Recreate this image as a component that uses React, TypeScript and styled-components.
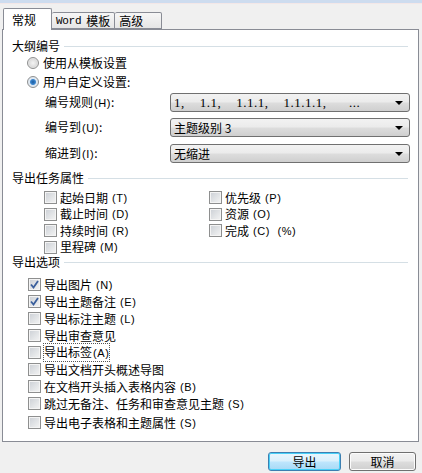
import React from 'react'
import styled, { createGlobalStyle } from 'styled-components'

const GlobalStyle = createGlobalStyle`
  html, body {
    margin: 0;
    padding: 0;
    background: #f0f0f0;
  }
  body {
    font-family: "Noto Sans CJK SC", "Liberation Sans", sans-serif;
    font-size: 12px;
    color: #000;
  }
`

const Window = styled.div`
  width: 422px;
  height: 473px;
  background: #f0f0f0;
  overflow: hidden;
  display: flex;
  flex-direction: column;
`

const TopStrip = styled.div`
  height: 3px;
  background: #cddcef;
  border-bottom: 1px solid #f3e7e7;
`

const TabBar = styled.div`
  display: flex;
  align-items: flex-end;
  height: 26px;
  padding-left: 3px;
  margin-bottom: -1px;
  position: relative;
  z-index: 1;
`

const Tab = styled.div<{ $active?: boolean; $first?: boolean; $width: number }>`
  height: ${p => (p.$active ? 22 : 17)}px;
  padding: 0 ${p => (p.$active ? 8 : 4)}px;
  margin-bottom: ${p => (p.$active ? 0 : 1)}px;
  min-width: ${p => p.$width}px;
  box-sizing: border-box;
  display: flex;
  align-items: center;
  border: 1px solid #898c95;
  border-bottom: ${p => (p.$active ? 'none' : '1px solid #898c95')};
  border-left: ${p => (p.$first || p.$active ? '1px solid #898c95' : 'none')};
  border-radius: 2px 2px 0 0;
  background: ${p => (p.$active ? '#fff' : 'linear-gradient(#f6f6f6, #e6e6e6)')};
  font-size: 12px;
  line-height: 14px;
  white-space: nowrap;
`

const Mono = styled.span`
  font-family: "Liberation Mono", monospace;
  font-size: 11px;
  letter-spacing: -0.3px;
  margin-right: 5px;
`

const Panel = styled.div`
  margin-left: 2px;
  width: 417px;
  height: 413px;
  box-sizing: border-box;
  border: 1px solid #898c95;
  background: #fff;
  padding: 8px 8px 0 9px;
  display: flex;
  flex-direction: column;
`

const GroupHeader = styled.div<{ $mt?: number }>`
  display: flex;
  align-items: center;
  gap: 4px;
  height: 16px;
  margin-top: ${p => p.$mt ?? 0}px;
  line-height: 16px;
  &::after {
    content: '';
    flex: 1;
    height: 1px;
    margin-right: 2px;
    background: #d5dfe5;
  }
`

const RadioRow = styled.label<{ $mt?: number }>`
  display: flex;
  align-items: center;
  gap: 4px;
  height: 18px;
  margin-top: ${p => p.$mt ?? 0}px;
  padding-left: 15px;
  line-height: 16px;
`

const RadioDot = styled.span<{ $on?: boolean }>`
  width: 12px;
  height: 12px;
  box-sizing: border-box;
  border-radius: 50%;
  border: 1px solid #8e8f8f;
  background: radial-gradient(circle at 50% 50%, ${p => (p.$on ? '#1b5a9e 0, #3d87cf 2.5px, #dfe8f1 3.5px' : '#f4f4f4 0, #dcdcdc 4px, #e8e8e8 5px')});
  flex: none;
`

const FieldRow = styled.div<{ $mt?: number }>`
  display: flex;
  align-items: center;
  height: 19px;
  margin-top: ${p => p.$mt ?? 0}px;
  padding-left: 33px;
`

const FieldLabel = styled.span`
  width: 125px;
  flex: none;
  line-height: 16px;
`

const Select = styled.div<{ $serif?: boolean }>`
  flex: 1;
  height: 19px;
  box-sizing: border-box;
  border: 1px solid #707070;
  border-radius: 3px;
  background: linear-gradient(#f2f2f2 0%, #ebebeb 48%, #dddddd 52%, #cfcfcf 100%);
  display: flex;
  align-items: center;
  padding: 0 6px 0 3px;
  line-height: 16px;
  font-family: ${p => (p.$serif ? '"Liberation Serif", serif' : 'inherit')};
  font-size: ${p => (p.$serif ? 13 : 12)}px;
  letter-spacing: ${p => (p.$serif ? 0.5 : 0)}px;
  white-space: pre;
`

const SelectText = styled.span`
  flex: 1;
`

const Arrow = styled.span`
  width: 0;
  height: 0;
  border-left: 4px solid transparent;
  border-right: 4px solid transparent;
  border-top: 4px solid #000;
`

const TaskGrid = styled.div`
  display: grid;
  grid-template-columns: 165px 1fr;
  grid-auto-flow: column;
  grid-template-rows: repeat(4, 16.5px);
  margin-top: 3px;
  padding-left: 32px;
`

const CheckRow = styled.label<{ $mt?: number; $indent?: number }>`
  display: flex;
  align-items: center;
  gap: 3px;
  height: 17px;
  margin-top: ${p => p.$mt ?? 0}px;
  padding-left: ${p => p.$indent ?? 0}px;
  line-height: 16px;
  white-space: nowrap;
`

const Box = styled.span`
  width: 13px;
  height: 13px;
  box-sizing: border-box;
  border: 1px solid #8e8f8f;
  background: linear-gradient(135deg, #cbcfd5 0%, #e4e6e8 60%, #f4f4f4 100%);
  box-shadow: inset 0 0 0 1px #f4f4f4;
  flex: none;
  display: flex;
  align-items: center;
  justify-content: center;
`

const Acc = styled.span`
  font-family: "Liberation Sans", sans-serif;
  font-size: 11px;
  margin-left: 1px;
  letter-spacing: 0.6px;
  white-space: pre;
`

const Focus = styled.span`
  outline: 1px dotted #555;
  outline-offset: 0;
`

const OptionList = styled.div`
  display: flex;
  flex-direction: column;
  margin-top: 6px;
`

const Footer = styled.div`
  display: flex;
  justify-content: flex-end;
  gap: 8px;
  padding: 10px 6px 0 0;
`

const Button = styled.button<{ $primary?: boolean }>`
  height: 19px;
  box-sizing: border-box;
  width: ${p => (p.$primary ? 73 : 67)}px;
  border-radius: 3px;
  border: 1px solid ${p => (p.$primary ? '#3c7fb1' : '#707070')};
  background: ${p =>
    p.$primary
      ? 'linear-gradient(#eaf6fd 0%, #d9f0fc 48%, #bee6fd 52%, #a7d9f5 100%)'
      : 'linear-gradient(#f2f2f2 0%, #ebebeb 48%, #dddddd 52%, #cfcfcf 100%)'};
  box-shadow: inset 0 0 0 1px ${p => (p.$primary ? '#48d0f8' : '#fcfcfc')};
  font-family: "Noto Sans CJK SC", sans-serif;
  font-size: 12px;
  line-height: 14px;
  padding: 0;
  color: #000;
`

const Check = () => (
  <svg width="9" height="9" viewBox="0 0 9 9">
    <path d="M1 4.5 L3.5 7.5 L8 1" fill="none" stroke="#3a5f9c" strokeWidth="1.8" />
  </svg>
)

const Cb = ({ on }: { on?: boolean }) => <Box>{on && <Check />}</Box>

const tasks: [string, string][] = [
  ['起始日期', 'T'],
  ['截止时间', 'D'],
  ['持续时间', 'R'],
  ['里程碑', 'M'],
  ['优先级', 'P'],
  ['资源', 'O'],
]

export default function App() {
  return (
    <Window>
      <GlobalStyle />
      <TopStrip />
      <TabBar>
        <Tab $active $first $width={49}>常规</Tab>
        <Tab $width={63}><Mono>Word</Mono>模板</Tab>
        <Tab $width={47}>高级</Tab>
      </TabBar>
      <Panel>
        <GroupHeader>大纲编号</GroupHeader>
        <RadioRow>
          <RadioDot />
          使用从模板设置
        </RadioRow>
        <RadioRow $mt={1}>
          <RadioDot $on />
          用户自定义设置:
        </RadioRow>
        <FieldRow $mt={2}>
          <FieldLabel>编号规则<Acc>(H)</Acc>:</FieldLabel>
          <Select $serif>
            <SelectText>{'1,    1.1,    1.1.1,    1.1.1.1,      ...'}</SelectText>
            <Arrow />
          </Select>
        </FieldRow>
        <FieldRow $mt={6}>
          <FieldLabel>编号到<Acc>(U)</Acc>:</FieldLabel>
          <Select>
            <SelectText>主题级别 3</SelectText>
            <Arrow />
          </Select>
        </FieldRow>
        <FieldRow $mt={7}>
          <FieldLabel>缩进到<Acc>(I)</Acc>:</FieldLabel>
          <Select>
            <SelectText>无缩进</SelectText>
            <Arrow />
          </Select>
        </FieldRow>

        <GroupHeader $mt={7}>导出任务属性</GroupHeader>
        <TaskGrid>
          {tasks.map(([t, k]) => (
            <CheckRow key={t}>
              <Cb />
              {t}<Acc>({k})</Acc>
            </CheckRow>
          ))}
          <CheckRow>
            <Cb />
            完成<Acc>{'(C)  (%)'}</Acc>
          </CheckRow>
        </TaskGrid>

        <GroupHeader $mt={-1}>导出选项</GroupHeader>
        <OptionList>
          <CheckRow $indent={16}><Cb on />导出图片<Acc>(N)</Acc></CheckRow>
          <CheckRow $indent={16}><Cb on />导出主题备注<Acc>(E)</Acc></CheckRow>
          <CheckRow $indent={16}><Cb />导出标注主题<Acc>(L)</Acc></CheckRow>
          <CheckRow $indent={16}><Cb />导出审查意见</CheckRow>
          <CheckRow $indent={16}><Cb /><Focus>导出标签<Acc>(A)</Acc></Focus></CheckRow>
          <CheckRow $indent={16}><Cb />导出文档开头概述导图</CheckRow>
          <CheckRow $indent={16}><Cb />在文档开头插入表格内容<Acc>(B)</Acc></CheckRow>
          <CheckRow $indent={16}><Cb />跳过无备注、任务和审查意见主题<Acc>(S)</Acc></CheckRow>
          <CheckRow $indent={16} $mt={2}><Cb />导出电子表格和主题属性<Acc>(S)</Acc></CheckRow>
        </OptionList>
      </Panel>
      <Footer>
        <Button $primary>导出</Button>
        <Button>取消</Button>
      </Footer>
    </Window>
  )
}
